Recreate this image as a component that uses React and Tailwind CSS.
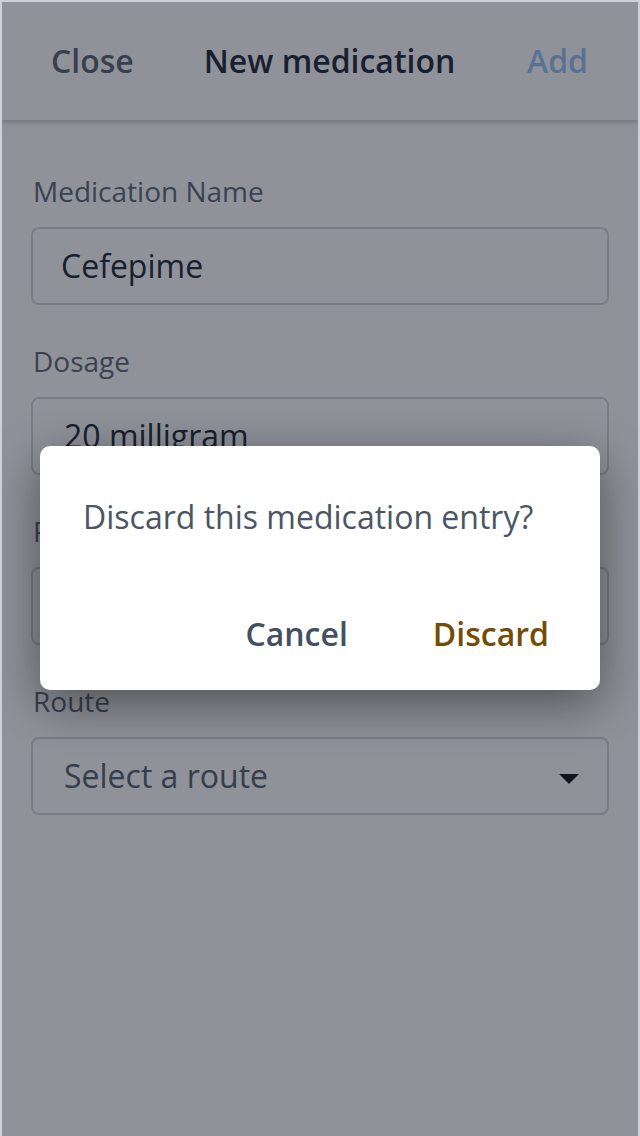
import React from "react";

function Field({ label, pad = "pl-[28px]", children }) {
  return (
    <div className="flex flex-col">
      <div className="text-[28px] leading-[34px] text-[#5f6877] pl-[2px]">{label}</div>
      <div className={"mt-[19px] h-[78px] rounded-[8px] border-2 border-[#d1d5db] flex items-center pr-[26px] " + pad}>
        {children}
      </div>
    </div>
  );
}

export default function App() {
  return (
    <div
      className="w-[640px] h-[1136px] border-l-2 border-r-2 border-t-2 border-[#ccd0db] bg-white relative overflow-hidden"
      style={{ fontFamily: '"Open Sans", "Noto Sans", sans-serif' }}
    >
      <div className="h-[118px] flex items-center shadow-[0_2px_6px_rgba(0,0,0,0.25)] relative z-10 bg-white">
        <span className="ml-[49px] text-[32px] font-semibold text-[#5c6572]">Close</span>
        <span className="ml-[70px] text-[32px] font-semibold text-[#1f2937]">New medication</span>
        <span className="ml-auto mr-[50px] text-[32px] font-semibold text-[#9cc3f0]">Add</span>
      </div>

      <div className="px-[29px] pt-[54px] flex flex-col gap-[39px]">
        <Field label="Medication Name">
          <span className="text-[32px] text-[#1f2937]">Cefepime</span>
        </Field>
        <Field label="Dosage" pad="pl-[31px]">
          <span className="text-[32px] text-[#1f2937]">20 milligram</span>
        </Field>
        <Field label="Frequency" pad="pl-[31px]">
          <span className="text-[32px] text-[#1f2937]"></span>
        </Field>
        <Field label="Route" pad="pl-[31px]">
          <span className="text-[32px] text-[#56606e] flex-1">Select a route</span>
          <svg width="20" height="10" viewBox="0 0 20 10" className="mr-[2px] mt-[6px]">
            <path d="M0 0 L20 0 L10 10 Z" fill="#111318" />
          </svg>
        </Field>
      </div>

      <div className="absolute inset-0 bg-[#111827]/[0.47] z-20"></div>

      <div className="absolute inset-0 z-30 flex items-center justify-center">
        <div className="w-[560px] h-[244px] -mt-[2px] bg-white rounded-[10px] shadow-[0_14px_50px_rgba(0,0,0,0.45)] flex flex-col">
          <div className="pl-[43px] pt-[49px] text-[32px] leading-[44px] text-[#4a5565]">
            Discard this medication entry?
          </div>
          <div className="mt-auto mb-[34px] flex justify-end gap-[85px] pr-[51px]">
            <span className="text-[32px] leading-[44px] font-semibold text-[#435062]">Cancel</span>
            <span className="text-[32px] leading-[44px] font-semibold text-[#744c06]">Discard</span>
          </div>
        </div>
      </div>
    </div>
  );
}
